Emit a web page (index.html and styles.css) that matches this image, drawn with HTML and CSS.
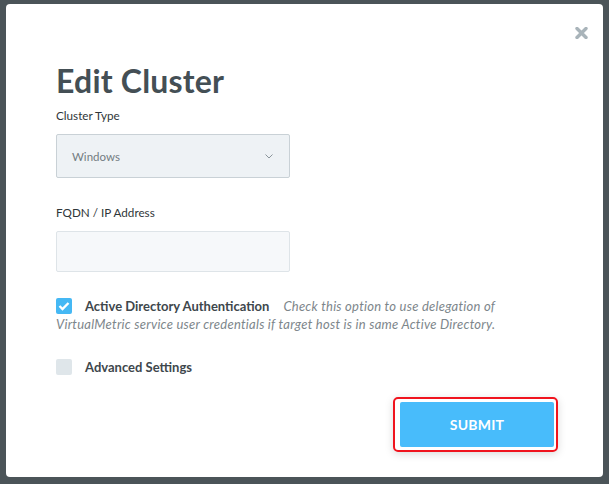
FILE: index.html
```html
<!DOCTYPE html>
<html>
<head>
<meta charset="utf-8">
<link rel="stylesheet" href="styles.css">
</head>
<body>
<div class="backdrop">
  <div class="modal">
    <button class="close" aria-label="Close">
      <svg width="13" height="12" viewBox="0 0 13 12"><path d="M2 1.5 L11 10.5 M11 1.5 L2 10.5" stroke="#a9b4ba" stroke-width="3.4" stroke-linecap="round"/></svg>
    </button>
    <h1 class="title">Edit Cluster</h1>
    <div class="field">
      <label class="label">Cluster Type</label>
      <div class="select">
        <span>Windows</span>
        <svg width="8" height="5" viewBox="0 0 8 5"><path d="M0.5 0.5 L4 4 L7.5 0.5" fill="none" stroke="#8a949a" stroke-width="1"/></svg>
      </div>
    </div>
    <div class="field field2">
      <label class="label">FQDN / IP Address</label>
      <div class="input"></div>
    </div>
    <div class="check-row">
      <span class="box checked">
        <svg width="12" height="10" viewBox="0 0 12 10"><path d="M1.5 5 L4.5 8 L10.5 2" fill="none" stroke="#fff" stroke-width="2.4"/></svg>
      </span>
      <p class="check-text"><b>Active Directory Authentication</b><i>Check this option to use delegation of VirtualMetric service user credentials if target host is in same Active Directory.</i></p>
    </div>
    <div class="check-row adv">
      <span class="box"></span>
      <p class="check-text"><b>Advanced Settings</b></p>
    </div>
    <div class="actions">
      <div class="focus-ring"><button class="submit">SUBMIT</button></div>
    </div>
  </div>
</div>
</body>
</html>
```
FILE: styles.css
```css
* { box-sizing: border-box; }
html, body { margin: 0; padding: 0; }
body {
  width: 609px;
  height: 484px;
  overflow: hidden;
  font-family: "Lato", "Open Sans", sans-serif;
}
.backdrop {
  width: 609px;
  height: 484px;
  background: #4b5458;
  padding: 4px 6px 0 6px;
}
.modal {
  position: relative;
  width: 597px;
  height: 473px;
  background: #fff;
  border-radius: 4px;
  padding: 57px 50px 0 50px;
}
.close {
  position: absolute;
  top: 23px;
  right: 15px;
  border: 0;
  background: none;
  padding: 0;
  width: 13px;
  height: 12px;
  display: block;
}
.close svg { display: block; }
.title {
  margin: 0;
  font-size: 32px;
  font-weight: 700;
  color: #444f55;
  line-height: 40px;
  letter-spacing: 0.2px;
}
.label {
  display: block;
  font-size: 11.7px;
  color: #2f3639;
  line-height: 16px;
  margin-top: 6px;
}
.select {
  margin-top: 11px;
  width: 234px;
  height: 44px;
  background: #eef2f5;
  border: 1px solid #c9d1d6;
  border-radius: 2px;
  display: flex;
  align-items: center;
  justify-content: space-between;
  padding: 0 16px 0 15px;
  font-size: 11.5px;
  color: #737c82;
}
.select svg { display: block; }
.field2 { margin-top: 26px; }
.input {
  margin-top: 11px;
  width: 234px;
  height: 41px;
  background: #f6f8fa;
  border: 1px solid #dee4e8;
  border-radius: 2px;
}
.check-row {
  position: relative;
  margin-top: 25px;
}
.box {
  position: absolute;
  left: 0;
  top: 1px;
  width: 16px;
  height: 16px;
  border-radius: 2px;
  background: #dfe6ea;
  display: flex;
  align-items: center;
  justify-content: center;
}
.box.checked { background: #45b8f4; }
.check-text {
  margin: 0;
  text-indent: 29px;
  font-size: 13px;
  line-height: 18px;
  color: #3e474c;
  width: 460px;
}
.check-text b { font-weight: 700; margin-right: 14px; }
.check-text i { color: #7d868b; font-style: italic; letter-spacing: 0.25px; }
.adv { margin-top: 25px; }
.actions {
  display: flex;
  justify-content: flex-end;
  margin-top: 21px;
  margin-right: -5px;
}
.focus-ring {
  border: 2px solid #f0141e;
  border-radius: 5px;
  padding: 3px 2px 3px 5px;
  box-shadow: 0 2px 8px rgba(0,0,0,0.15);
}
.submit {
  display: block;
  width: 154px;
  height: 45px;
  border: 0;
  border-radius: 2px;
  background: #48bcfb;
  color: #fff;
  font-family: "Lato", "Open Sans", sans-serif;
  font-weight: 700;
  font-size: 14px;
  letter-spacing: 0.2px;
}
```
